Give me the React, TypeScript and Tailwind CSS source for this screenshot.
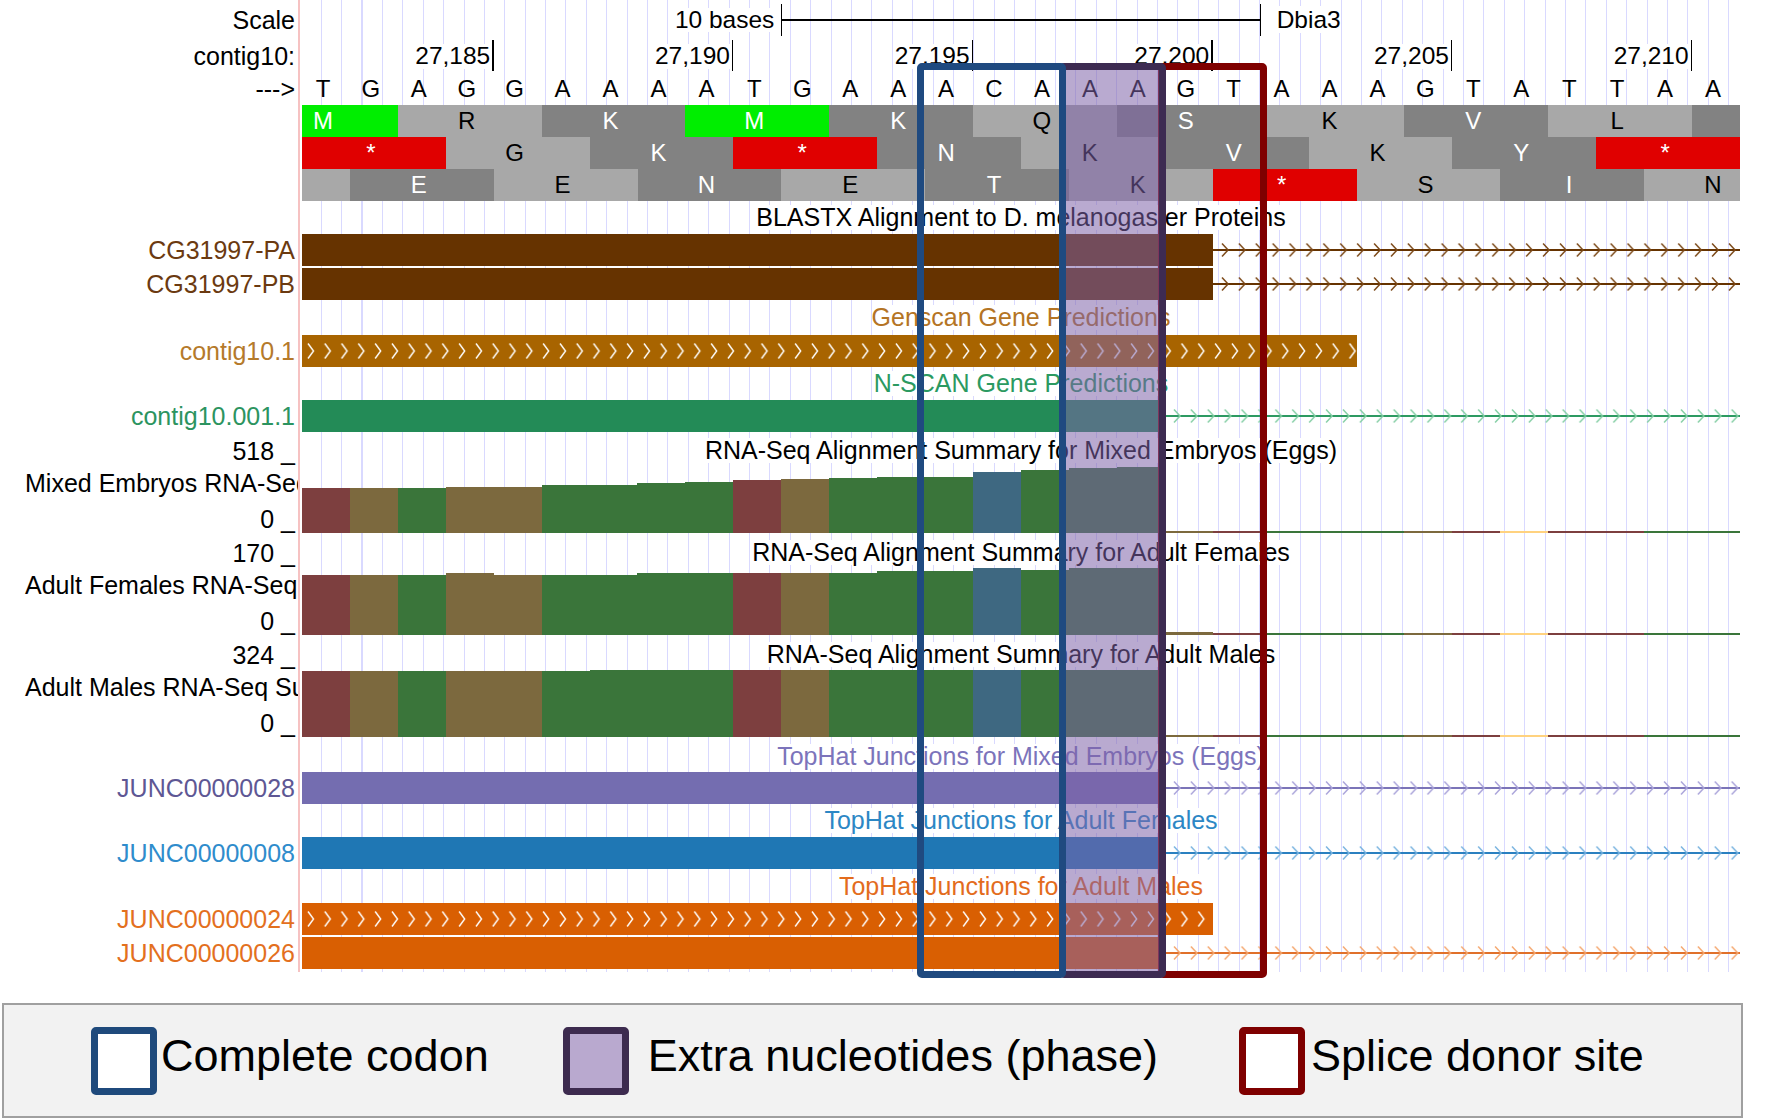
import React from 'react';

// one base = 1438px / 30 bases
const BW = 1438 / 30;
const SEQ = 'TGAGGAAAATGAAACAAAGTAAAGTATTAA'.split('');

const BLOCK: Record<string, string> = {
  g: 'bg-[#00ee00] text-white',
  r: 'bg-[#e00000] text-white',
  l: 'bg-[#a8a8a8] text-black',
  d: 'bg-[#828282] text-white',
};

// [bases, colour, letter, letter offset in bases]
type Blk = [number, string, string?, number?];

const frames: Blk[][] = [
  [[2, 'g', 'M', 0], [3, 'l', 'R'], [3, 'd', 'K'], [3, 'g', 'M'], [3, 'd', 'K'], [3, 'l', 'Q'], [3, 'd', 'S'], [3, 'l', 'K'], [3, 'd', 'V'], [3, 'l', 'L'], [1, 'd']],
  [[3, 'r', '*'], [3, 'l', 'G'], [3, 'd', 'K'], [3, 'r', '*'], [3, 'd', 'N'], [3, 'l', 'K'], [3, 'd', 'V'], [3, 'l', 'K'], [3, 'd', 'Y'], [3, 'r', '*']],
  [[1, 'l'], [3, 'd', 'E'], [3, 'l', 'E'], [3, 'd', 'N'], [3, 'l', 'E'], [3, 'd', 'T'], [3, 'l', 'K'], [3, 'r', '*'], [3, 'l', 'S'], [3, 'd', 'I'], [2, 'l', 'N', 1]],
];

const WIG: Record<string, string> = { T: '#7d3f3f', G: '#7c693e', A: '#3a753a', C: '#3e6881', Y: '#ffd27f' };
const lineBases = ['G', 'T', 'A', 'A', 'A', 'G', 'T', 'Y', 'T', 'T', 'A', 'A'];

const wiggles = [
  { top: '518 _', name: 'Mixed Embryos RNA-Seq Summary', title: 'RNA-Seq Alignment Summary for Mixed Embryos (Eggs)', h: [45, 45, 45, 46, 46, 48, 48, 50, 51, 53, 54, 55, 56, 56, 61, 63, 65, 66], first: 2 },
  { top: '170 _', name: 'Adult Females RNA-Seq Summary', title: 'RNA-Seq Alignment Summary for Adult Females', h: [60, 60, 60, 62, 60, 60, 60, 62, 62, 62, 62, 62, 64, 64, 67, 65, 67, 67], first: 3 },
  { top: '324 _', name: 'Adult Males RNA-Seq Summary', title: 'RNA-Seq Alignment Summary for Adult Males', h: [66, 66, 66, 66, 66, 66, 67, 67, 67, 67, 67, 67, 67, 67, 67, 67, 67, 67], first: 2 },
];

const Row = ({ h, left, children }: { h: string; left?: React.ReactNode; children?: React.ReactNode }) => (
  <div className={`flex ${h}`}>
    <div className="w-[300px] shrink-0 border-r-2 border-[#f6c2c2] overflow-hidden flex items-center justify-end pr-[3px] whitespace-nowrap">
      {left}
    </div>
    <div className="ml-[2px] w-[1438px] shrink-0 bg-[repeating-linear-gradient(90deg,transparent_0px,transparent_18.7px,#d9d9ff_18.7px,#d9d9ff_19.7px,transparent_19.7px,transparent_20.4px)]">
      {children}
    </div>
  </div>
);

const Title = ({ text, color }: { text: string; color: string }) => (
  <div className="h-full flex items-center justify-center">
    <span className={`bg-white leading-none text-[25px] ${color}`}>{text}</span>
  </div>
);

// thin line with chevrons after a feature
const Arrows = ({ id, line, chev }: { id: string; line: string; chev: string }) => (
  <div className="flex-1 min-w-0 h-full">
    <svg width="100%" height="100%">
      <defs>
        <pattern id={id} x="0" y="0" width="16.9" height="32" patternUnits="userSpaceOnUse">
          <polyline points="9,9.5 15,16 9,22.5" fill="none" stroke={chev} strokeWidth="1.5" />
        </pattern>
      </defs>
      <line x1="0" x2="100%" y1="16" y2="16" stroke={line} strokeWidth="2.2" />
      <rect width="100%" height="100%" fill={`url(#${id})`} />
    </svg>
  </div>
);

// white chevrons drawn inside a bar
const InnerChevrons = ({ id }: { id: string }) => (
  <svg width="100%" height="100%">
    <defs>
      <pattern id={id} x="0" y="0" width="16.8" height="32" patternUnits="userSpaceOnUse">
        <polyline points="6,8.5 11.5,16 6,23.5" fill="none" stroke="#ffffff" strokeWidth="1.4" />
      </pattern>
    </defs>
    <rect width="100%" height="100%" fill={`url(#${id})`} />
  </svg>
);

const Label = ({ text, color }: { text: string; color: string }) => (
  <span className={`leading-none ${color}`}>{text}</span>
);

const positions = [
  { label: '27,185', span: 'col-span-4' },
  { label: '27,190', span: 'col-span-5' },
  { label: '27,195', span: 'col-span-5' },
  { label: '27,200', span: 'col-span-5' },
  { label: '27,205', span: 'col-span-5' },
  { label: '27,210', span: 'col-span-5' },
];

export default function App() {
  return (
    <div className="w-[1768px] h-[1120px] bg-white overflow-hidden font-['Liberation_Sans',Arial,sans-serif] text-[25px] text-black">
      <div className="relative h-[1003px]">
        {/* ruler */}
        <Row h="h-[40px]" left={<Label text="Scale" color="text-black" />}>
          <div className="h-full grid grid-cols-[1fr_479.3px_1fr] items-center text-[24.5px]">
            <div className="flex justify-end pr-[7px]">
              <span className="bg-white leading-none">10 bases</span>
            </div>
            <div className="h-[32px] border-x-[1.5px] border-black flex items-center">
              <div className="h-[1.5px] w-full bg-black" />
            </div>
            <div className="pl-[16px]">
              <span className="bg-white leading-none">Dbia3</span>
            </div>
          </div>
        </Row>

        <Row h="h-[33px]" left={<Label text="contig10:" color="text-black" />}>
          <div className="h-full grid grid-cols-[repeat(30,minmax(0,1fr))] text-[24.5px]">
            {positions.map(p => (
              <div key={p.label} className={`${p.span} flex justify-end items-center h-full`}>
                <span className="leading-none pr-[2px] bg-white">{p.label}</span>
                <div className="self-start w-[1.5px] h-[31px] bg-black" />
              </div>
            ))}
          </div>
        </Row>

        {/* bases */}
        <Row h="h-[32px]" left={<Label text="--->" color="text-black" />}>
          <div className="h-full grid grid-cols-[repeat(30,minmax(0,1fr))] items-center">
            {SEQ.map((b, i) => (
              <div key={i} className="text-center leading-none text-[24px] pr-[6px]">{b}</div>
            ))}
          </div>
        </Row>

        {/* three-frame translation */}
        {frames.map((row, ri) => (
          <Row key={ri} h="h-[32px]">
            <div className="h-full flex">
              {row.map(([n, c, t, k], bi) => (
                <div key={bi} className={`h-full flex items-center shrink-0 text-[24px] leading-none ${BLOCK[c]}`} style={{ width: n * BW }}>
                  {t && (
                    <div className="text-center shrink-0 pr-[6px]" style={{ width: BW, marginLeft: (k ?? 1) * BW }}>
                      {t}
                    </div>
                  )}
                </div>
              ))}
            </div>
          </Row>
        ))}

        {/* BLASTX */}
        <Row h="h-[33px]">
          <Title text="BLASTX Alignment to D. melanogaster Proteins" color="text-black" />
        </Row>
        <Row h="h-[32px]" left={<Label text="CG31997-PA" color="text-[#6b3a10]" />}>
          <div className="h-full flex">
            <div className="w-[910.7px] h-full bg-[#663300]" />
            <Arrows id="bx-a" line="#663300" chev="#7a4716" />
          </div>
        </Row>
        <Row h="h-[2px]" />
        <Row h="h-[32px]" left={<Label text="CG31997-PB" color="text-[#6b3a10]" />}>
          <div className="h-full flex">
            <div className="w-[910.7px] h-full bg-[#663300]" />
            <Arrows id="bx-b" line="#663300" chev="#7a4716" />
          </div>
        </Row>

        {/* Genscan */}
        <Row h="h-[35px]">
          <Title text="Genscan Gene Predictions" color="text-[#b47424]" />
        </Row>
        <Row h="h-[32px]" left={<Label text="contig10.1" color="text-[#b57a2b]" />}>
          <div className="h-full flex">
            <div className="w-[1054.5px] h-full bg-[#a86400]">
              <InnerChevrons id="gs" />
            </div>
          </div>
        </Row>

        {/* N-SCAN */}
        <Row h="h-[33px]">
          <Title text="N-SCAN Gene Predictions" color="text-[#2b9a61]" />
        </Row>
        <Row h="h-[32px]" left={<Label text="contig10.001.1" color="text-[#2c9460]" />}>
          <div className="h-full flex">
            <div className="w-[862.8px] h-full bg-[#238b57]" />
            <Arrows id="ns" line="#2d9a62" chev="#86cfa6" />
          </div>
        </Row>
        <Row h="h-[2px]" />

        {/* RNA-Seq coverage */}
        {wiggles.map((w, wi) => (
          <Row
            key={wi}
            h="h-[102px]"
            left={
              <div className="w-full h-full flex flex-col">
                <div className="h-[34px] flex items-center justify-end leading-none">{w.top}</div>
                <div className="h-[30px] flex items-center pl-[25px] leading-none">{w.name}</div>
                <div className="h-[4px]" />
                <div className="h-[34px] flex items-center justify-end leading-none">0 _</div>
              </div>
            }
          >
            <div className="h-full flex flex-col">
              <div className="h-[32px]">
                <Title text={w.title} color="text-black" />
              </div>
              <div className="h-[67px] flex items-end">
                {w.h.map((hh, i) => (
                  <div key={i} className="shrink-0" style={{ width: BW, height: hh, background: WIG[SEQ[i]] }} />
                ))}
                {lineBases.map((b, i) => (
                  <div key={'l' + i} className="shrink-0" style={{ width: BW, height: i === 0 ? w.first : 2, background: WIG[b] }} />
                ))}
              </div>
            </div>
          </Row>
        ))}

        {/* TopHat junctions */}
        <Row h="h-[32px]">
          <Title text="TopHat Junctions for Mixed Embryos (Eggs)" color="text-[#7c74bb]" />
        </Row>
        <Row h="h-[32px]" left={<Label text="JUNC00000028" color="text-[#5e5794]" />}>
          <div className="h-full flex">
            <div className="w-[862.8px] h-full bg-[#746db0]" />
            <Arrows id="j28" line="#7b74b8" chev="#aaa4da" />
          </div>
        </Row>
        <Row h="h-[33px]">
          <Title text="TopHat Junctions for Adult Females" color="text-[#2c87c5]" />
        </Row>
        <Row h="h-[32px]" left={<Label text="JUNC00000008" color="text-[#2f8ccc]" />}>
          <div className="h-full flex">
            <div className="w-[862.8px] h-full bg-[#1f77b4]" />
            <Arrows id="j08" line="#2a80c0" chev="#7ab4e0" />
          </div>
        </Row>
        <Row h="h-[34px]">
          <Title text="TopHat Junctions for Adult Males" color="text-[#e36c1d]" />
        </Row>
        <Row h="h-[32px]" left={<Label text="JUNC00000024" color="text-[#e3701e]" />}>
          <div className="h-full flex">
            <div className="w-[910.7px] h-full bg-[#d95f02]">
              <InnerChevrons id="j24" />
            </div>
          </div>
        </Row>
        <Row h="h-[2px]" />
        <Row h="h-[32px]" left={<Label text="JUNC00000026" color="text-[#e3701e]" />}>
          <div className="h-full flex">
            <div className="w-[862.8px] h-full bg-[#d95f02]" />
            <Arrows id="j26" line="#e0702a" chev="#f5a870" />
          </div>
        </Row>
        <Row h="h-[3px]" />

        {/* highlight boxes laid over the tracks */}
        <div className="absolute left-[1158px] top-[63px] w-[109px] h-[915px] border-[7px] border-[#7f0000] rounded-[5px]" />
        <div className="absolute left-[1059px] top-[63px] w-[107px] h-[915px] border-[7px] border-[#3d2b52] bg-[rgba(126,98,168,0.54)] rounded-[5px]" />
        <div className="absolute left-[917px] top-[63px] w-[149px] h-[915px] border-[7px] border-[#1f4a80] rounded-[5px]" />
      </div>

      {/* legend */}
      <div className="ml-[2px] w-[1741px] h-[115px] border-2 border-[#a0a0a0] bg-[#f2f2f2] flex items-center pl-[87px] text-[45px] leading-none">
        <div className="w-[66px] h-[68px] border-[7px] border-[#1f4a7c] rounded-[5px] bg-white shrink-0" />
        <span className="ml-[4px] mb-[10px]">Complete codon</span>
        <div className="ml-[74px] w-[66px] h-[68px] border-[7px] border-[#3d2b4f] rounded-[5px] bg-[#b9a9cf] shrink-0" />
        <span className="ml-[19px] mb-[10px]">Extra nucleotides (phase)</span>
        <div className="ml-[81px] w-[66px] h-[68px] border-[7px] border-[#7f0000] rounded-[5px] bg-white shrink-0" />
        <span className="ml-[6px] mb-[10px]">Splice donor site</span>
      </div>
    </div>
  );
}
